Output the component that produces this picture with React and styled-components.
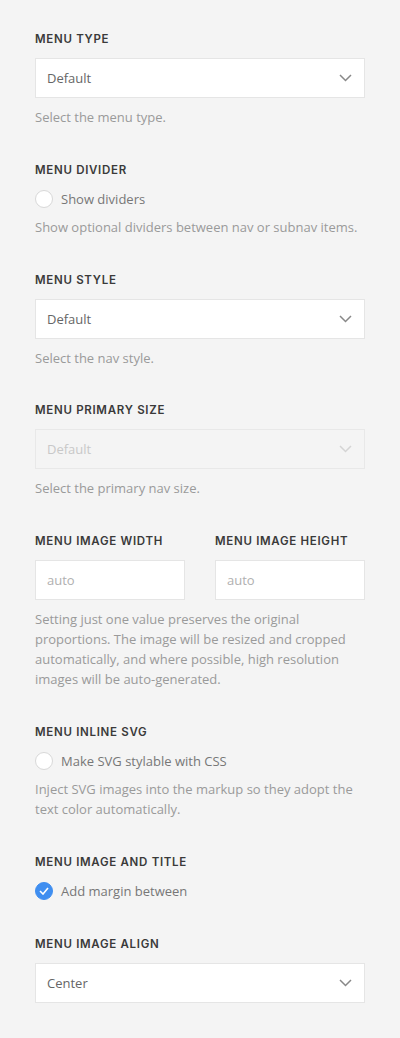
import React from "react";
import styled, { createGlobalStyle } from "styled-components";

const GlobalStyle = createGlobalStyle`
  html, body {
    margin: 0;
    padding: 0;
    background: #f4f4f4;
  }
  * { box-sizing: border-box; }
`;

const Panel = styled.div`
  width: 400px;
  min-height: 1038px;
  padding: 32px 35px 35px;
  background: #f4f4f4;
  font-family: "Open Sans", "Liberation Sans", sans-serif;
  display: flex;
  flex-direction: column;
  gap: 35.8px;
`;

const Field = styled.div`
  display: flex;
  flex-direction: column;
`;

const Row = styled.div`
  display: grid;
  grid-template-columns: 1fr 1fr;
  column-gap: 30px;
`;

const Label = styled.div`
  font-family: "Inter", "Liberation Sans", sans-serif;
  font-size: 11.5px;
  font-weight: 600;
  line-height: 14px;
  letter-spacing: 0.7px;
  text-transform: uppercase;
  color: #3a3a3a;
  margin-bottom: 12px;
`;

const SelectBox = styled.div`
  height: 40px;
  display: flex;
  align-items: center;
  justify-content: space-between;
  padding: 0 12px 0 11px;
  background: ${p => (p.$disabled ? "transparent" : "#fff")};
  border: 1px solid ${p => (p.$disabled ? "#e8e8e8" : "#e5e5e5")};
  color: ${p => (p.$disabled ? "#c8c8c8" : "#666")};
  font-size: 13px;
`;

const Chevron = styled.svg`
  width: 13px;
  height: 8px;
  stroke: ${p => (p.$disabled ? "#d4d4d4" : "#888")};
  stroke-width: 1.5;
  fill: none;
`;

const TextInput = styled.div`
  height: 40px;
  display: flex;
  align-items: center;
  padding: 0 11px;
  background: #fff;
  border: 1px solid #e5e5e5;
  color: #b0b0b0;
  font-size: 13px;
`;

const Help = styled.p`
  margin: ${p => (p.$afterToggle ? 8 : 9)}px 0 0;
  font-size: 13px;
  line-height: 20px;
  color: #9a9a9a;
`;

const Toggle = styled.label`
  display: flex;
  align-items: center;
  gap: 8px;
  height: 20px;
  font-size: 13px;
  color: #777;
`;

const Circle = styled.span`
  width: 18px;
  height: 18px;
  border-radius: 50%;
  flex-shrink: 0;
  display: flex;
  align-items: center;
  justify-content: center;
  background: ${p => (p.$checked ? "#3f8ef0" : "#fff")};
  border: 1px solid ${p => (p.$checked ? "#3f8ef0" : "#d8d8d8")};
`;

const Select = ({ value, disabled }) => (
  <SelectBox $disabled={disabled}>
    <span>{value}</span>
    <Chevron $disabled={disabled} viewBox="0 0 13 8">
      <polyline points="1,1 6.5,6.5 12,1" />
    </Chevron>
  </SelectBox>
);

const Check = ({ checked, children }) => (
  <Toggle>
    <Circle $checked={checked}>
      {checked && (
        <svg width="10" height="8" viewBox="0 0 10 8" fill="none" stroke="#fff" strokeWidth="1.6">
          <polyline points="1,4 4,7 9,1" />
        </svg>
      )}
    </Circle>
    {children}
  </Toggle>
);

export default function App() {
  return (
    <>
      <GlobalStyle />
      <Panel>
        <Field>
          <Label>Menu Type</Label>
          <Select value="Default" />
          <Help>Select the menu type.</Help>
        </Field>

        <Field>
          <Label>Menu Divider</Label>
          <Check>Show dividers</Check>
          <Help $afterToggle>Show optional dividers between nav or subnav items.</Help>
        </Field>

        <Field>
          <Label>Menu Style</Label>
          <Select value="Default" />
          <Help>Select the nav style.</Help>
        </Field>

        <Field>
          <Label>Menu Primary Size</Label>
          <Select value="Default" disabled />
          <Help>Select the primary nav size.</Help>
        </Field>

        <Field>
          <Row>
            <Field>
              <Label>Menu Image Width</Label>
              <TextInput>auto</TextInput>
            </Field>
            <Field>
              <Label>Menu Image Height</Label>
              <TextInput>auto</TextInput>
            </Field>
          </Row>
          <Help>
            Setting just one value preserves the original proportions. The image will be resized
            and cropped automatically, and where possible, high resolution images will be
            auto-generated.
          </Help>
        </Field>

        <Field>
          <Label>Menu Inline SVG</Label>
          <Check>Make SVG stylable with CSS</Check>
          <Help $afterToggle>
            Inject SVG images into the markup so they adopt the text color automatically.
          </Help>
        </Field>

        <Field>
          <Label>Menu Image and Title</Label>
          <Check checked>Add margin between</Check>
        </Field>

        <Field>
          <Label>Menu Image Align</Label>
          <Select value="Center" />
        </Field>
      </Panel>
    </>
  );
}
